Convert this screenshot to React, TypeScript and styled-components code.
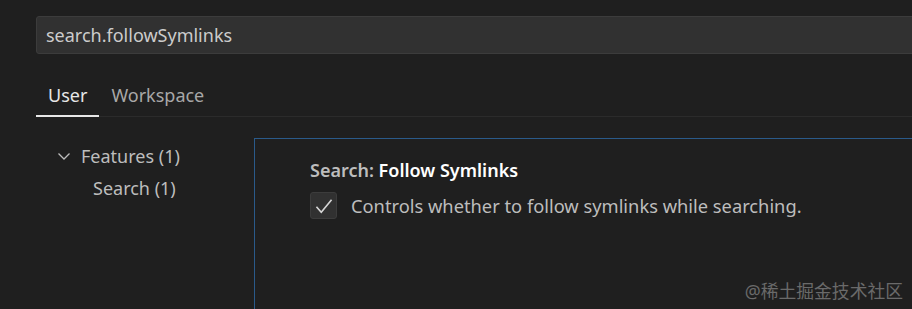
import React from "react";
import styled, { createGlobalStyle } from "styled-components";

const Global = createGlobalStyle`
  html, body {
    margin: 0;
    padding: 0;
    background: #1f1f1f;
    overflow: hidden;
  }
  body {
    font-family: "Noto Sans", "Open Sans", sans-serif;
    color: #cccccc;
  }
`;

const Page = styled.div`
  width: 912px;
  height: 309px;
  background: #1f1f1f;
  padding: 16px 0 0 36px;
  box-sizing: border-box;
  position: relative;
  overflow: hidden;
`;

const SearchBox = styled.div`
  height: 38px;
  margin-right: -10px;
  background: #313131;
  border: 1px solid #3c3c3c;
  border-radius: 3px;
  box-sizing: border-box;
  display: flex;
  align-items: center;
  padding-left: 9px;
  font-size: 18px;
  color: #cccccc;
`;

const TabBar = styled.div`
  display: flex;
  margin-top: 22px;
  border-bottom: 1px solid #2b2b2b;
  height: 41px;
  box-sizing: border-box;
`;

const Tab = styled.div<{ $active?: boolean }>`
  padding: 0 12px;
  font-size: 18px;
  line-height: 38px;
  color: ${({ $active }) => ($active ? "#e7e7e7" : "#a8a8a8")};
  border-bottom: 2px solid ${({ $active }) => ($active ? "#e7e7e7" : "transparent")};
  margin-bottom: -1px;
`;

const Body = styled.div`
  display: flex;
  margin-top: 21px;
`;

const Tree = styled.div`
  width: 218px;
  padding-top: 2px;
  display: flex;
  flex-direction: column;
`;

const TreeRow = styled.div<{ $indent: number }>`
  display: flex;
  align-items: center;
  height: 32px;
  padding-left: ${({ $indent }) => $indent}px;
  font-size: 18px;
  color: #bdbdbd;
`;

const Chevron = styled.svg`
  width: 16px;
  height: 16px;
  margin-right: 9px;
`;

const Panel = styled.div`
  flex: 1;
  height: 200px;
  border-top: 1px solid #2a5a8a;
  border-left: 1px solid #2a5a8a;
  padding: 19px 0 0 55px;
`;

const Title = styled.div`
  font-size: 18px;
  font-weight: 600;
  color: #bdbdbd;
  line-height: 24px;
`;

const TitleStrong = styled.span`
  color: #ffffff;
`;

const Row = styled.div`
  display: flex;
  align-items: center;
  margin-top: 10px;
  gap: 14px;
`;

const Check = styled.div`
  width: 27px;
  height: 27px;
  box-sizing: border-box;
  background: #313131;
  border: 1px solid #3c3c3c;
  border-radius: 3px;
  display: flex;
  align-items: center;
  justify-content: center;
`;

const Desc = styled.div`
  font-size: 18.3px;
  color: #bdbdbd;
`;

const Watermark = styled.div`
  position: absolute;
  right: 9px;
  bottom: 6px;
  font-size: 17.8px;
  color: #6a6a6a;
  font-family: "Noto Sans", "Noto Sans CJK SC", sans-serif;
`;

export default function App() {
  return (
    <>
      <Global />
      <Page>
        <SearchBox>search.followSymlinks</SearchBox>
        <TabBar>
          <Tab $active>User</Tab>
          <Tab>Workspace</Tab>
        </TabBar>
        <Body>
          <Tree>
            <TreeRow $indent={20}>
              <Chevron viewBox="0 0 16 16" fill="none" stroke="#bdbdbd" strokeWidth="1.3">
                <path d="M2.5 5.5l5.5 5.5 5.5-5.5" />
              </Chevron>
              Features (1)
            </TreeRow>
            <TreeRow $indent={57}>Search (1)</TreeRow>
          </Tree>
          <Panel>
            <Title>
              Search: <TitleStrong>Follow Symlinks</TitleStrong>
            </Title>
            <Row>
              <Check>
                <svg width="22" height="22" viewBox="0 0 16 16" fill="none" stroke="#d6d6d6" strokeWidth="1.2">
                  <path d="M2.5 8.5l3.5 4 7.5-9" />
                </svg>
              </Check>
              <Desc>Controls whether to follow symlinks while searching.</Desc>
            </Row>
          </Panel>
        </Body>
        <Watermark>@稀土掘金技术社区</Watermark>
      </Page>
    </>
  );
}
